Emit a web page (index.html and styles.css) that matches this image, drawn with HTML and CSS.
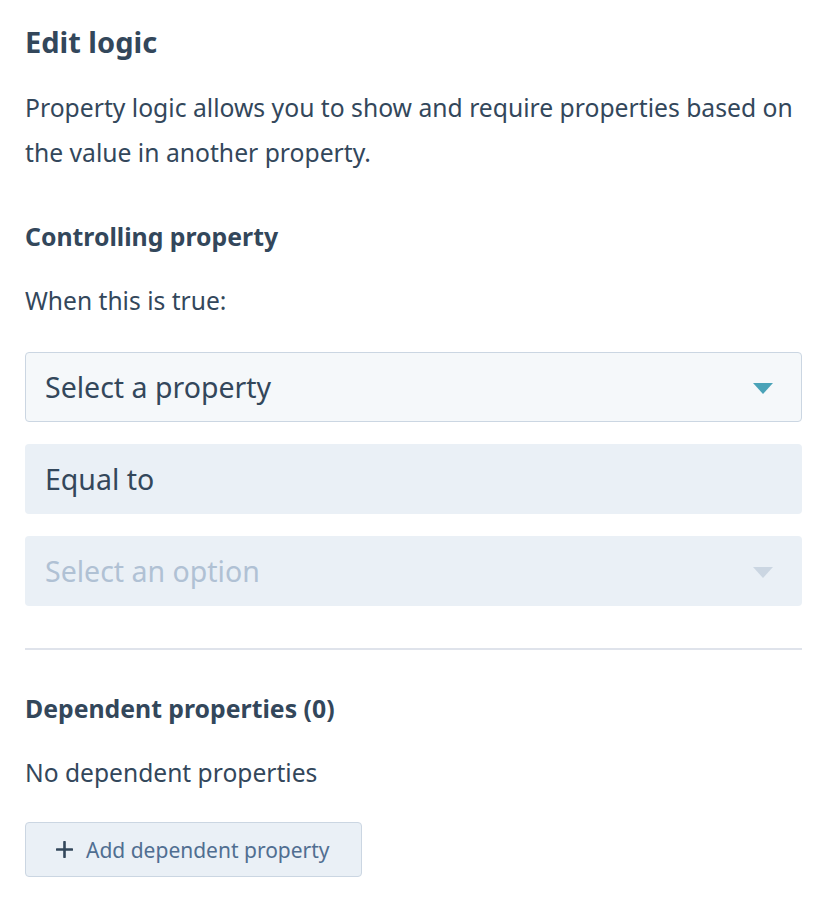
FILE: index.html
```html
<!DOCTYPE html>
<html>
<head>
<meta charset="utf-8">
<link rel="stylesheet" href="styles.css">
</head>
<body>
<div class="panel">
  <h1 class="title">Edit logic</h1>
  <p class="desc">Property logic allows you to show and require properties based on the value in another property.</p>

  <h2 class="section-title">Controlling property</h2>
  <p class="label">When this is true:</p>

  <div class="fields">
    <div class="field field-select">
      <span class="field-text">Select a property</span>
      <span class="caret caret-active"></span>
    </div>
    <div class="field field-readonly">
      <span class="field-text">Equal to</span>
    </div>
    <div class="field field-disabled">
      <span class="field-text">Select an option</span>
      <span class="caret caret-disabled"></span>
    </div>
  </div>

  <hr class="divider">

  <h2 class="section-title dep-title">Dependent properties (0)</h2>
  <p class="label empty">No dependent properties</p>

  <button class="add-btn" type="button">
    <svg class="plus" width="17" height="17" viewBox="0 0 17 17" aria-hidden="true">
      <path d="M8.5 1v15M1 8.5h15" stroke="#33475b" stroke-width="2.6" stroke-linecap="round" fill="none"/>
    </svg>
    <span>Add dependent property</span>
  </button>
</div>
</body>
</html>
```

FILE: styles.css
```css
* { box-sizing: border-box; }

html, body {
  margin: 0;
  padding: 0;
  background: #ffffff;
}

body {
  font-family: "Noto Sans", "DejaVu Sans", sans-serif;
  color: #33475b;
}

.panel {
  width: 826px;
  padding: 24px 24px 0 25px;
  display: flex;
  flex-direction: column;
}

.title {
  margin: 0;
  font-size: 29px;
  line-height: 36px;
  font-weight: 700;
}

.desc {
  margin: 25px 0 0;
  font-size: 24.7px;
  line-height: 45px;
  font-weight: 400;
}

.section-title {
  margin: 45px 0 0;
  font-size: 24.8px;
  line-height: 32px;
  font-weight: 700;
}

.label {
  margin: 29px 0 0;
  font-size: 24.6px;
  line-height: 40px;
  font-weight: 400;
}

.fields {
  margin-top: 31px;
  display: flex;
  flex-direction: column;
  gap: 22px;
}

.field {
  height: 70px;
  border-radius: 4px;
  padding: 0 29px 0 20px;
  display: flex;
  align-items: center;
  justify-content: space-between;
  font-size: 28.5px;
}

.field-select {
  background: #f5f8fa;
  border: 1px solid #cbd6e2;
  padding-left: 19px;
  padding-right: 28px;
}

.field-readonly {
  background: #eaf0f6;
}

.field-disabled {
  background: #eaf0f6;
  color: #b0c1d4;
}

.caret {
  width: 0;
  height: 0;
  border-left: 10.5px solid transparent;
  border-right: 10.5px solid transparent;
  border-top: 11px solid #4aa3b8;
  margin-top: 2px;
}

.caret-disabled {
  border-top-color: #cbd6e2;
}

.divider {
  margin: 42px 0 0;
  border: 0;
  height: 2px;
  background: #dfe3eb;
}

.dep-title {
  margin-top: 42px;
}

.empty {
  margin-top: 29px;
}

.add-btn {
  margin-top: 29px;
  align-self: flex-start;
  width: 337px;
  height: 55px;
  background: #eaf0f6;
  border: 1px solid #cbd6e2;
  border-radius: 4px;
  display: flex;
  align-items: center;
  gap: 13px;
  padding: 0 0 0 30px;
  font-family: inherit;
  font-size: 21px;
  color: #506e91;
  cursor: pointer;
}

.plus {
  flex: none;
}
```
